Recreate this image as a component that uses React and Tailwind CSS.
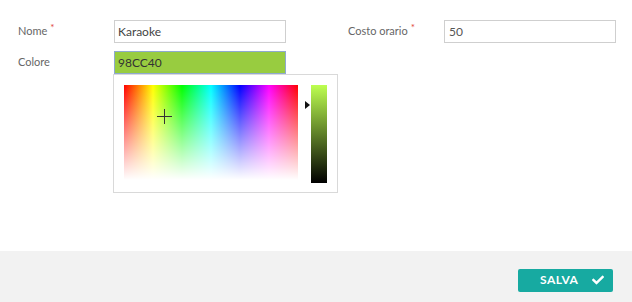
import React from "react";
import { FaCheck } from "react-icons/fa";

function Label({ text, required }) {
  return (
    <div className="w-[96px] flex items-start text-[11px] text-[#666] leading-none -mt-[2px]">
      <span>{text}</span>
      {required && <span className="text-[#e0443a] text-[10px] ml-[3px] -mt-[3px]">*</span>}
    </div>
  );
}

export default function App() {
  return (
    <div className="w-[632px] h-[302px] flex flex-col bg-white font-['Lato','Open_Sans',sans-serif]">
      <div className="flex-1 pt-[20px] pl-[18px] flex flex-col gap-[8px]">
        <div className="flex items-center">
          <Label text="Nome" required />
          <div className="w-[172px] h-[23px] border border-[#cfcfcf] flex items-center pl-[3px] text-[12px] text-[#444]">
            Karaoke
          </div>
          <div className="ml-[62px] flex items-center">
            <Label text="Costo orario" required />
            <div className="w-[172px] h-[23px] border border-[#cfcfcf] flex items-center pl-[4px] text-[12px] text-[#555]">
              50
            </div>
          </div>
        </div>
        <div className="flex items-center relative">
          <Label text="Colore" />
          <div className="relative">
            <div className="w-[172px] h-[23px] border border-[#8fa9cf] bg-[#98CC40] flex items-center pl-[3px] text-[12px] text-[#333]">
              98CC40
            </div>
            <div className="absolute left-[-1px] top-[23px] w-[225px] h-[119px] bg-white border border-[#d9d9d9] flex p-[10px] gap-[13px]">
              <div className="relative w-[174px] h-[95px] bg-[linear-gradient(to_right,#ff0000,#ffff00,#00ff00,#00ffff,#0000ff,#ff00ff,#ff0000)]">
                <div className="absolute inset-0 bg-[linear-gradient(to_bottom,rgba(255,255,255,0),#ffffff)]" />
                <div className="absolute left-[33px] top-[31px] w-[15px] h-[1px] bg-[#333]" />
                <div className="absolute left-[40px] top-[24px] w-[1px] h-[15px] bg-[#333]" />
              </div>
              <div className="relative w-[16px] h-[98px] bg-[linear-gradient(to_bottom,#bdff50,#000000)]">
                <div className="absolute left-[-6px] top-[16px] w-0 h-0 border-y-[4px] border-y-transparent border-l-[5px] border-l-[#111]" />
              </div>
            </div>
          </div>
        </div>
      </div>
      <div className="h-[51px] bg-[#f2f2f2] flex items-center justify-end pr-[19px]">
        <button className="w-[95px] h-[23px] rounded-[2px] bg-[#17aaa1] text-white flex items-center justify-between pl-[22px] pr-[9px] mt-[7px]">
          <span className="text-[12px] font-bold tracking-[0.5px]">SALVA</span>
          <FaCheck className="w-[12px] h-[12px]" />
        </button>
      </div>
    </div>
  );
}
